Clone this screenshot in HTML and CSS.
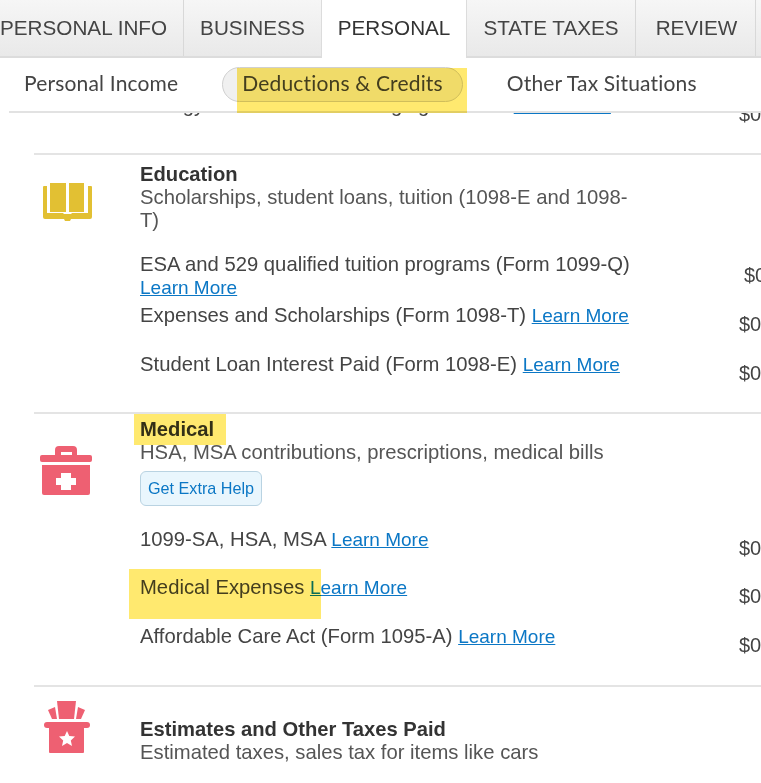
FILE: index.html
```html
<!DOCTYPE html>
<html lang="en">
<head>
<meta charset="utf-8">
<title>Deductions &amp; Credits</title>
<link rel="stylesheet" href="styles.css">
</head>
<body>
<div class="page">
  <header class="top">
    <nav class="tabs">
      <div class="tab">PERSONAL INFO</div>
      <div class="tab">BUSINESS</div>
      <div class="tab active">PERSONAL</div>
      <div class="tab">STATE TAXES</div>
      <div class="tab tab-review">REVIEW</div>
      <div class="tab">&nbsp;</div>
    </nav>
    <nav class="subnav">
      <div class="sub sub-plain">Personal Income</div>
      <div class="sub pill">Deductions &amp; Credits</div>
      <div class="sub sub-plain">Other Tax Situations</div>
      <div class="mark mark-nav"></div>
    </nav>
  </header>
  <main class="main">
    <section class="section clipped">
      <div class="icon-col"></div>
      <div class="body">
        <div class="row"><div class="row-text">Energy and Home Car Charging Stations <a href="#">Learn More</a></div><div class="amt">$0</div></div>
      </div>
    </section>
    <section class="section section-edu">
      <div class="icon-col">
        <svg class="icon icon-book" width="50" height="38" viewBox="0 0 50 38"><rect x="7" y="0" width="16" height="29" fill="#e2c033"/><rect x="26" y="0" width="15" height="29" fill="#e2c033"/><path d="M0 4a1 1 0 0 1 1-1h3v27h16a4 4 0 0 0 1 1h7a4 4 0 0 0 1-1h16V3h3a1 1 0 0 1 1 1v30a2 2 0 0 1-2 2H28l-1 2h-5l-1-2H2a2 2 0 0 1-2-2z" fill="#e2c033"/></svg>
      </div>
      <div class="body">
        <h3 class="title">Education</h3>
        <p class="desc">Scholarships, student loans, tuition (1098-E and 1098-T)</p>
        <div class="rows">
          <div class="row tall"><div class="row-text">ESA and 529 qualified tuition programs (Form 1099-Q) <a href="#">Learn More</a></div><div class="amt shifted">$0</div></div>
          <div class="row"><div class="row-text">Expenses and Scholarships (Form 1098-T) <a href="#">Learn More</a></div><div class="amt">$0</div></div>
          <div class="row"><div class="row-text">Student Loan Interest Paid (Form 1098-E) <a href="#">Learn More</a></div><div class="amt">$0</div></div>
        </div>
      </div>
    </section>
    <section class="section section-med">
      <div class="icon-col">
        <svg class="icon icon-kit" width="52" height="50" viewBox="0 0 52 50"><path fill-rule="evenodd" d="M15 10V4a4 4 0 0 1 4-4h14a4 4 0 0 1 4 4v6zM21 6v3h11V6z" fill="#ee6072"/><rect x="0" y="9" width="52" height="7" rx="2" fill="#ee6072"/><path d="M2 19h48v28a2 2 0 0 1-2 2H4a2 2 0 0 1-2-2z" fill="#ee6072"/><path d="M21 27h10v5h5v7h-5v5H21v-5h-5v-7h5z" fill="#fff"/></svg>
      </div>
      <div class="body">
        <h3 class="title">Medical</h3>
        <p class="desc">HSA, MSA contributions, prescriptions, medical bills</p>
        <button class="help">Get Extra Help</button>
        <div class="rows rows-medical">
          <div class="row"><div class="row-text">1099-SA, HSA, MSA <a href="#">Learn More</a></div><div class="amt">$0</div></div>
          <div class="row"><div class="row-text">Medical Expenses <a href="#">Learn More</a></div><div class="amt">$0</div></div>
          <div class="row"><div class="row-text">Affordable Care Act (Form 1095-A) <a href="#">Learn More</a></div><div class="amt">$0</div></div>
        </div>
      </div>
      <div class="mark mark-title"></div>
      <div class="mark mark-expenses"></div>
    </section>
    <section class="section">
      <div class="icon-col">
        <svg class="icon icon-box" width="46" height="53" viewBox="0 0 46 53"><path d="M13 0h19l-2 18H15z" fill="#ee6072"/><path d="M4 9l7-3 2 12H8z" fill="#ee6072"/><path d="M41 9l-7-3-2 12h5z" fill="#ee6072"/><rect x="0" y="21" width="46" height="6" rx="3" fill="#ee6072"/><path d="M5 27h35v24a1 1 0 0 1-1 1H6a1 1 0 0 1-1-1z" fill="#ee6072"/><path d="M23 30l2.300 5 5.700.6-4.200 3.800 1.200 5.600-5-2.900-5 2.900 1.200-5.600-4.200-3.800 5.700-.6z" fill="#fff"/></svg>
      </div>
      <div class="body">
        <h3 class="title title-est">Estimates and Other Taxes Paid</h3>
        <p class="desc">Estimated taxes, sales tax for items like cars</p>
      </div>
    </section>
  </main>
</div>
</body>
</html>
```
FILE: styles.css
```css
* { box-sizing: border-box; }
html, body { margin: 0; padding: 0; background: #fff; }
body { font-family: "Liberation Sans", Arial, sans-serif; color: #444; }
.page { width: 761px; height: 783px; overflow: hidden; }
.top { position: relative; z-index: 2; }
.tabs { display: flex; height: 58px; margin-left: -16px; width: 790px; border-bottom: 2px solid #dcdcdc; }
.tab {
  font-size: 20.7px; line-height: 56px; padding: 0 16px; color: #444;
  background: linear-gradient(#f6f6f6, #e9e9e9);
  border-right: 1px solid #d8d8d8; white-space: nowrap;
}
.tab:last-child { flex: 1; }
.tab.tab-review { padding: 0 18px 0 20px; }
.tab.active { background: #fff; color: #333; border-right: 1px solid #dcdcdc; border-left: 1px solid #dcdcdc; margin-left: -1px; margin-bottom: -2px; height: 58px; }
.subnav { position: relative; display: flex; align-items: center; height: 55px; padding-left: 24px; font-family: Lato, sans-serif; font-size: 21px; color: #444; letter-spacing: .17px; background: #fff; border-bottom: 2px solid; border-image: linear-gradient(90deg, #fff 10px, #e2e2e2 10px) 1; }
.sub { white-space: nowrap; margin-top: -3px; }
.sub.sub-plain { margin-top: -5px; }
.pill { margin: 0 44px; padding: 0 19px; height: 35px; line-height: 30px; border: 1px solid #d0d0d0; border-radius: 18px; background: #f0f0f0; }
.mark { position: absolute; background: #ffe96f; mix-blend-mode: multiply; pointer-events: none; }
.mark-nav { left: 237px; top: 10px; width: 230px; height: 45px; }
.mark-title { left: 100px; top: -0.6px; width: 92px; height: 31px; }
.mark-expenses { left: 95px; top: 154.4px; width: 192px; height: 50px; }
.main { margin-left: 34px; margin-top: -19px; width: 727px; }
.section { position: relative; display: flex; border-top: 2px solid #e4e4e4; padding: 6px 0 0; }
.section-edu { padding-top: 8px; }
.section-med { padding-top: 3.6px; }
.clipped { border-top: 0; padding: 0; }
.clipped .body { padding-bottom: 10.4px; }
.icon-col { width: 106px; flex: none; }
.icon { display: block; }
.icon-book { margin: 20px 0 0 9px; }
.icon-kit { margin: 28px 0 0 6px; }
.icon-box { margin: 8px 0 0 10px; }
.body { width: 621px; flex: none; padding-bottom: 11px; }
.title { margin: 0; font-size: 20.2px; line-height: 23px; font-weight: bold; color: #333; }
.title-est { margin-top: 25px; }
.desc { margin: 0; max-width: 495px; font-size: 20.25px; line-height: 23px; color: #555; }
.rows { margin-top: 21px; }
.rows-medical { margin-top: 22px; }
.row { display: flex; min-height: 48.6px; font-size: 20.25px; line-height: 23px; }
.row.tall { min-height: 51px; }
.row-text { width: 599px; padding-right: 100px; flex: none; }
.amt { padding-top: 9px; font-size: 20px; color: #444; white-space: nowrap; }
.amt.shifted { padding-top: 11px; margin-left: 5px; }
a { color: #0b77c5; text-decoration: underline; font-size: 19px; }
.help { display: block; margin-top: 7px; height: 35px; width: 122px; padding: 0; border: 1px solid #b9d3e2; border-radius: 6px; background: #e9f6fd; color: #0b77c5; font-family: inherit; font-size: 16.2px; }
```
